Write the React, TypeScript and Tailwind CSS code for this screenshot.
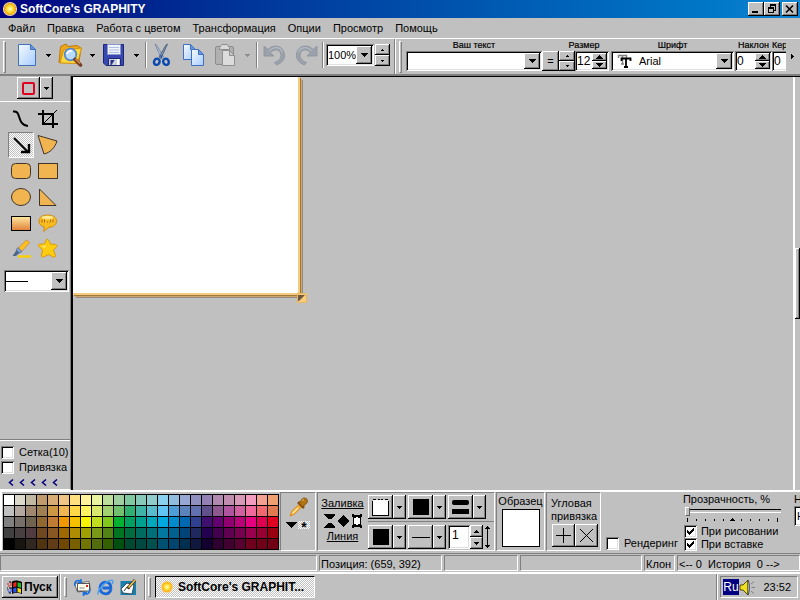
import React from 'react';

const RAISED =
  'bg-[#c0c0c0] shadow-[inset_-1px_-1px_0_#000,inset_1px_1px_0_#fff,inset_-2px_-2px_0_#808080]';
const SUNKEN =
  'bg-white shadow-[inset_1px_1px_0_#808080,inset_-1px_-1px_0_#fff,inset_2px_2px_0_#000,inset_-2px_-2px_0_#dfdfdf]';
const GROOVE = 'border border-t-[#808080] border-l-[#808080] border-r-white border-b-white';
const DITHER =
  'bg-[repeating-conic-gradient(#fff_0_25%,#c0c0c0_0_50%)] bg-[length:2px_2px]';

const palette: string[][] = [
  'ffffff ddd8cc c0b8a0 c09c6c d8ac74 f0c484 ffe080 fff49c e8f4a0 bce09c a0d0a0 80c8a0 88c8b8 90cccc 8cd0f0 90bce0 98a8d4 9090c0 9480b4 b088b0 c08cb0 d898b8 f49cc0 f4a090 f0a070',
  'c0c0c0 b4a8a0 a08870 a08050 cc9844 f0b450 ffd848 fff460 d8e86c a0d070 70c070 30b070 40b4a4 58bccc 60c4f4 4c9cd8 5c84bc 6070b0 60508c 905890 b054a0 d060a0 f0689c f06870 e07850',
  '808080 787068 706450 906830 c07c34 f09800 f4c000 f8f400 c0dc20 80c81c 00b030 00a060 00a090 00a8bc 00a8e0 008ccc 0068b0 304090 401070 640070 900070 b80078 e40080 e00050 e00020',
  '404040 484040 503c40 704820 885824 a06800 b08c00 a0a000 789818 508414 007420 006c40 006c60 007078 0078a0 006090 004478 202860 240050 440050 600050 780050 980050 980034 980010',
  '000000 181410 302820 503410 603c18 704800 786000 707400 546c10 346000 005010 004830 004840 005050 005070 004470 003050 101840 140030 300030 400030 580030 700020 700018 700014',
].map((row) => row.split(' ').map((c) => '#' + c));

/* ---------- small shared pieces ---------- */

const Down: React.FC<{ wide?: boolean; color?: string }> = ({ wide, color = '#000' }) => (
  <svg width={wide ? 7 : 5} height={wide ? 4 : 3} viewBox={wide ? '0 0 7 4' : '0 0 5 3'} shapeRendering="crispEdges">
    <path d={wide ? 'M0 0h7v1h-1v1h-1v1h-1v1h-1v-1h-1v-1h-1v-1h-1z' : 'M0 0h5v1h-1v1h-1v1h-1v-1h-1v-1h-1z'} fill={color} />
  </svg>
);

const Up: React.FC<{ small?: boolean; wide?: boolean }> = ({ small, wide }) => {
  if (wide) {
    return (
      <svg width="7" height="4" viewBox="0 0 7 4" shapeRendering="crispEdges">
        <path d="M0 4h7v-1h-1v-1h-1v-1h-1v-1h-1v1h-1v1h-1v1h-1z" />
      </svg>
    );
  }
  return (
    <svg width={small ? 3 : 5} height={small ? 2 : 3} viewBox={small ? '0 0 3 2' : '0 0 5 3'} shapeRendering="crispEdges">
      <path d={small ? 'M0 2h3v-1h-1v-1h-1v1h-1z' : 'M0 3h5v-1h-1v-1h-1v-1h-1v1h-1v1h-1z'} />
    </svg>
  );
};

const TinyDown = () => (
  <svg width="3" height="2" viewBox="0 0 3 2" shapeRendering="crispEdges">
    <path d="M0 0h3v1h-1v1h-1v-1h-1z" />
  </svg>
);

const Spin: React.FC<{ name: string; kind?: 'small' | 'wide' | 'mid' }> = ({ name, kind = 'small' }) => (
  <div className="flex h-full w-full flex-col">
    <button aria-label={`${name} +`} className={`${RAISED} flex min-h-0 flex-1 items-center justify-center`}>
      <Up small={kind === 'small'} wide={kind === 'wide'} />
    </button>
    <button aria-label={`${name} -`} className={`${RAISED} flex min-h-0 flex-1 items-center justify-center`}>
      {kind === 'small' ? <TinyDown /> : <Down wide={kind === 'wide'} />}
    </button>
  </div>
);

const Combo: React.FC<{ label: string; value?: string; className: string; children?: React.ReactNode; inset?: string }> = ({
  label,
  value = '',
  className,
  children,
  inset = 'pl-px',
}) => (
  <div className={`${SUNKEN} relative flex items-center p-[2px] ${className}`}>
    {children}
    <select aria-label={label} className={`h-full min-w-0 flex-1 appearance-none text-[11px] leading-4 outline-none ${inset}`}>
      <option>{value}</option>
    </select>
    <span className={`${RAISED} pointer-events-none absolute inset-y-[2px] right-[2px] flex w-4 items-center justify-center`}>
      <Down wide />
    </span>
  </div>
);

const NumberField: React.FC<{ label: string; value: string; className: string }> = ({ label, value, className }) => (
  <div className={`${SUNKEN} flex h-5 p-[2px] ${className}`}>
    <input aria-label={label} defaultValue={value} className="min-w-0 flex-1 text-xs outline-none" />
    <div className="w-[15px] shrink-0">
      <Spin name={label} kind="wide" />
    </div>
  </div>
);

const Check: React.FC<{ label: string; checked?: boolean; className?: string }> = ({ label, checked, className = 'gap-1' }) => (
  <label className={`flex items-center text-[11px] leading-[13px] whitespace-nowrap ${className}`}>
    <span className="grid shrink-0">
      <input
        type="checkbox"
        defaultChecked={checked}
        className={`${SUNKEN} peer col-start-1 row-start-1 size-[13px] appearance-none`}
      />
      <svg width="13" height="13" viewBox="0 0 13 13" shapeRendering="crispEdges" className="pointer-events-none col-start-1 row-start-1 hidden peer-checked:block">
        <path d="M3 5h1v1h1v1h1v-1h1v-1h1v-1h1v-1h1v3h-1v1h-1v1h-1v1h-1v1h-1v-1h-1v-1h-1z" />
      </svg>
    </span>
    {label}
  </label>
);

const Divider = () => <div className="h-[26px] w-[2px] shrink-0 border-l border-[#808080] bg-white" />;
const Grip = ({ className = 'h-8' }: { className?: string }) => (
  <div className={`w-[3px] shrink-0 border border-t-white border-l-white border-r-[#808080] border-b-[#808080] ${className}`} />
);

const ToolButton: React.FC<{ label: string; className: string; children: React.ReactNode }> = ({ label, className, children }) => (
  <button aria-label={label} className={`flex h-7 shrink-0 items-center justify-center ${className}`}>
    {children}
  </button>
);

/* ---------- icons ---------- */

const Sun = ({ size = 16 }: { size?: number }) => (
  <svg width={size} height={size} viewBox="0 0 16 16">
    <defs>
      <radialGradient id="sun">
        <stop offset="0" stopColor="#fffbe0" />
        <stop offset=".4" stopColor="#ffe850" />
        <stop offset=".8" stopColor="#ffbc10" />
        <stop offset="1" stopColor="#f0a830" />
      </radialGradient>
    </defs>
    <circle cx="8" cy="8" r="6.400" fill="none" stroke="#f8d8a0" strokeWidth="1.400" />
    <circle cx="8" cy="8" r="6" fill="url(#sun)" />
  </svg>
);

const PageShape = ({ x, y, w, h, gray }: { x: number; y: number; w: number; h: number; gray?: boolean }) => (
  <g transform={`translate(${x} ${y})`}>
    <path
      d={`M.5 .5H${w - 5.5}L${w - 0.5} 5.5V${h - 0.5}H.5Z`}
      fill={gray ? '#dcdcdc' : 'url(#paper)'}
      stroke={gray ? '#909090' : '#4070c0'}
    />
    <path d={`M${w - 5.5} .5V5.5H${w - 0.5}Z`} fill={gray ? '#c8c8c8' : '#6898e0'} stroke={gray ? '#909090' : '#4070c0'} strokeLinejoin="round" />
  </g>
);

const paperGradient = (
  <defs>
    <linearGradient id="paper" x1="0" y1="0" x2="1" y2="1">
      <stop offset="0" stopColor="#f4faff" />
      <stop offset="1" stopColor="#a8ccff" />
    </linearGradient>
  </defs>
);

const NewIcon = () => (
  <svg width="19" height="24" viewBox="0 0 19 24">
    {paperGradient}
    <PageShape x={0} y={1} w={18} h={22} />
  </svg>
);

const OpenIcon = () => (
  <svg width="25" height="24" viewBox="0 0 25 24">
    <path d="M1 19.500L2.500 3.500L8 1L10 3.500L19 2.500L23 5L21 19Z" fill="#f0a818" stroke="#b87810" />
    <path d="M2 20L5.500 7L23.500 5L19.500 20.500Z" fill="#ffd83c" stroke="#d09010" />
    <circle cx="12.500" cy="11.500" r="5.800" fill="#b8dcff" stroke="#5888c8" strokeWidth="1.800" />
    <path d="M9 11a4 4 0 0 1 5-3" stroke="#fff" strokeWidth="1.800" fill="none" />
    <path d="M17 16.500L22.500 22" stroke="#784028" strokeWidth="3.600" strokeLinecap="round" />
    <path d="M17.500 16L22 20.500" stroke="#d88848" strokeWidth="1.400" />
  </svg>
);

const SaveIcon = () => (
  <svg width="22" height="24" viewBox="0 0 22 24">
    <path d="M.5 1.500H20.500V22.500H3L.5 20Z" fill="#3848b0" stroke="#182878" />
    <path d="M4.500 1.500h13v10h-13z" fill="#f0f4fc" stroke="#8898c8" />
    <path d="M6 4.500h10M6 7h10M6 9.500h10" stroke="#b0bce0" />
    <path d="M5.500 15.500h12v7h-12z" fill="#c8d0dc" stroke="#202870" />
    <path d="M7.500 17h4l-3 5h-1z" fill="#283080" />
    <path d="M15 16v6" stroke="#fff" strokeWidth="2" />
  </svg>
);

const CutIcon = () => (
  <svg width="19" height="24" viewBox="0 0 19 24">
    <path d="M3 1L4.500 2L11.500 14L9.500 15.500Z" fill="#c8d8ec" stroke="#607898" strokeWidth=".8" />
    <path d="M15.500 1L14 2L7 14L9 15.500Z" fill="#8098b8" stroke="#405878" strokeWidth=".8" />
    <path d="M10.500 12.500L9.200 15L8 12.500" fill="#1848a0" />
    <ellipse cx="4.800" cy="18.800" rx="2.700" ry="3.200" transform="rotate(28 4.800 18.800)" fill="none" stroke="#0848b0" strokeWidth="2.400" />
    <ellipse cx="14" cy="18.800" rx="2.700" ry="3.200" transform="rotate(-28 14 18.800)" fill="none" stroke="#0848b0" strokeWidth="2.400" />
  </svg>
);

const CopyIcon = () => (
  <svg width="22" height="24" viewBox="0 0 22 24">
    <PageShape x={0} y={1} w={13} h={16} />
    <PageShape x={8} y={6} w={13} h={17} />
  </svg>
);

const PasteIcon = () => (
  <svg width="22" height="24" viewBox="0 0 22 24">
    <rect x=".5" y="3.500" width="18" height="18" rx="1.500" fill="#b0b0b0" stroke="#8c8c8c" />
    <path d="M4.500 4.500L7 1.500H12L14.500 4.500V6.500H4.500Z" fill="#d8d8d8" stroke="#8c8c8c" />
    <PageShape x={7} y={7} w={13} h={16} gray />
  </svg>
);

const UndoIcon = ({ flip }: { flip?: boolean }) => (
  <svg width="23" height="22" viewBox="0 0 23 22" className={flip ? '-scale-x-100' : ''}>
    <path d="M1 2V12H11L7.500 8.500C11 4.500 17.500 5 18 11C18.200 14.500 15 17.500 11.500 18.500L13.500 21C19 19 22 15 21.500 10C20.500 1.500 10.500 -.5 5 5.500Z" fill="#9ca2ac" stroke="#8a909a" strokeWidth=".8" />
    <path d="M6.500 7C10 2 18 2.500 19.500 8.500" fill="none" stroke="#b4bac4" strokeWidth="1.200" />
  </svg>
);

const tools: { name: string; icon: React.ReactNode }[] = [
  { name: 'Кривая', icon: <path d="M3 3.500C7 3 8 5 9 8.500C10.500 13.500 12 17.500 18 18" fill="none" stroke="#000" strokeWidth="2" /> },
  {
    name: 'Обрезка',
    icon: (
      <g fill="none" stroke="#000">
        <path d="M1 6h15v14M6 2v14h15" strokeWidth="2" />
        <path d="M6 16L20 2" />
      </g>
    ),
  },
  {
    name: 'Стрелка',
    icon: (
      <g fill="none" stroke="#000" strokeWidth="2">
        <path d="M4 4L18 18" />
        <path d="M19 10v9M11 18h9" strokeWidth="2.400" />
      </g>
    ),
  },
  { name: 'Сектор', icon: <path d="M1 1.500L20 7C18 13.500 13.500 18.500 7 20Z" fill="#f0b450" stroke="#40342c" /> },
  { name: 'Скруглённый прямоугольник', icon: <rect x="1.500" y="3.500" width="19" height="15" rx="4" fill="#f0b450" stroke="#40342c" /> },
  { name: 'Прямоугольник', icon: <rect x="1.500" y="3.500" width="19" height="15" fill="#f0b450" stroke="#40342c" /> },
  { name: 'Эллипс', icon: <ellipse cx="11" cy="11" rx="9.500" ry="8.500" fill="#f0b450" stroke="#40342c" /> },
  { name: 'Треугольник', icon: <path d="M2.500 3V19.500H19Z" fill="#f0b450" stroke="#40342c" /> },
  {
    name: 'Градиент',
    icon: (
      <>
        <defs>
          <linearGradient id="grad" x1="0" y1="0" x2="0" y2="1">
            <stop offset="0" stopColor="#ffe8a0" />
            <stop offset="1" stopColor="#e08038" />
          </linearGradient>
        </defs>
        <rect x="1.500" y="4.500" width="19" height="14" fill="url(#grad)" stroke="#000" />
      </>
    ),
  },
  {
    name: 'Выноска',
    icon: (
      <>
        <path d="M10.500 3C5 3 2 5.300 2 9C2 12.300 4.500 14.500 7.500 15L6.500 19.500L12 15.300C17 15 19.500 12.500 19.500 9C19.500 5.300 16 3 10.500 3Z" fill="#f8bc20" stroke="#d08c18" />
        <ellipse cx="10.500" cy="5.500" rx="6" ry="1.800" fill="#ffe890" />
        <path d="M5 7.500v3M7.500 7.500v3M10 10h1M13.500 7.500v2l-1 1M16 7.500v2l-1 1" stroke="#a86410" fill="none" />
      </>
    ),
  },
  {
    name: 'Маркер',
    icon: (
      <>
        <path d="M8 18.500h13" stroke="#ffd000" strokeWidth="2.400" />
        <path d="M2.500 18L7 11.500L10 14.500L6 18Z" fill="#506888" />
        <path d="M8 10.500L16.500 2L19.500 4.500L11 14Z" fill="#ffc020" stroke="#c88818" strokeWidth=".8" />
        <path d="M6 12l2-2.500l4 4l-2.500 1.500z" fill="#88a0d0" stroke="#486098" strokeWidth=".7" />
      </>
    ),
  },
  {
    name: 'Звезда',
    icon: (
      <>
        <path d="M9.500 1.500C10.500 1 11.500 1.500 12 3L13.500 6L18.500 6.500C20.500 7 20.500 8.500 19 9.500L16.500 12L18.500 17.500C18.500 19 17.500 19.500 16 19L11.500 16.500L6.500 19C5 19.500 4 18.500 4.500 17L5.500 12L2 8.500C1 7 1.500 6 3.500 6L7.500 6Z" fill="#ffcc10" stroke="#d89810" />
        <path d="M9.500 3.500L8.500 7.500L4.500 8L8 10" fill="#fff080" />
      </>
    ),
  },
];

const WindowsFlag = () => (
  <svg width="17" height="15" viewBox="0 0 17 15">
    <path d="M6 1.500C9 0 11.500 0 16 2V14C11.500 12 9 12.500 6 14Z" fill="#000" />
    <path d="M7.200 3C8.500 2.300 9.500 2 10.500 2V6.500C9.500 6.500 8.500 6.700 7.200 7.300Z" fill="#f02018" />
    <path d="M11.500 2.200L15 3.300V8L11.500 6.700Z" fill="#18c020" />
    <path d="M7.200 8.400C8.500 7.700 9.500 7.500 10.500 7.600V12C9.500 12 8.500 12.200 7.200 12.800Z" fill="#2850f8" />
    <path d="M11.500 7.700L15 9V13L11.500 12Z" fill="#f8e010" />
    <path d="M4 3h2M4 5h2M1 4h2M2 6h2" stroke="#e02020" />
    <path d="M4 9h2M4 11h2M1 10h2M2 12h2" stroke="#2040e0" />
    <path d="M3 2h2M3 8h3M1 8h1M3 13h2" stroke="#000" />
  </svg>
);

const MailIcon = () => (
  <svg width="17" height="17" viewBox="0 0 17 17">
    <path d="M.5 4.500L15 2.500L16.500 11L3.500 13Z" fill="#fff" stroke="#505050" strokeWidth=".8" />
    <path d="M3.500 4.500h12v7.500h-12z" fill="#fffbe8" stroke="#303030" strokeWidth=".8" />
    <path d="M12 6h2v2h-2z" fill="#e02020" />
    <path d="M5.500 9h5" stroke="#888" />
    <path d="M1 7C0 2.500 3 .5 7 2M7 0v3.500H4" fill="none" stroke="#1870e0" strokeWidth="1.600" />
    <path d="M15.500 10C16.500 14 13 16 9.500 14.500M9.500 17v-3.500H13" fill="none" stroke="#1870e0" strokeWidth="1.600" />
  </svg>
);

const ExplorerIcon = () => (
  <svg width="17" height="17" viewBox="0 0 17 17">
    <path d="M14 10.500C13 13.500 11 14.800 8.500 14.800C5 14.800 3 12.300 3 9C3 5.500 5.500 3.200 8.600 3.200C12 3.200 14 5.500 13.900 9H5.500" fill="none" stroke="#1868d8" strokeWidth="2.800" />
    <path d="M1.500 15.500C-1 12 9.500 1 14.500 1.200C16.500 1.300 16 3.500 15 5" fill="none" stroke="#48a0f0" strokeWidth="1.500" />
  </svg>
);

const DesktopIcon = () => (
  <svg width="17" height="17" viewBox="0 0 17 17">
    <rect x=".5" y="2" width="15.500" height="14" fill="#1880b0" />
    <path d="M1 10L7 4L14 6L12 15L3 14Z" fill="#fff" stroke="#203040" strokeWidth=".8" />
    <path d="M4 12L7 8L10 9.500" fill="none" stroke="#304050" />
    <path d="M7.500 9.500L15 1" stroke="#503010" strokeWidth="3" />
    <path d="M8.500 8.500L15 1" stroke="#f0c860" strokeWidth="1.600" />
  </svg>
);

const SpeakerIcon = () => (
  <svg width="17" height="17" viewBox="0 0 17 17">
    <path d="M1 6h3L9 1V16L4 11H1Z" fill="#f0e020" stroke="#404000" strokeWidth=".9" />
    <path d="M9 1C11 5 11 12 9 16Z" fill="#fff" stroke="#404040" strokeWidth=".9" />
    <path d="M12 5L15 2.500M12.500 8.500H16M12 12L15 14.500" stroke="#808080" />
  </svg>
);

const Dropper = () => (
  <svg width="19" height="20" viewBox="0 0 19 20">
    <path d="M1 19L3 14L10 7.500L12.500 10L5.500 17Z" fill="#f8b040" stroke="#d88818" />
    <path d="M3.500 16.500L9 11" stroke="#ffe8a0" strokeWidth="1.500" />
    <path d="M9 5L15 11" stroke="#805010" strokeWidth="2.600" />
    <path d="M10.500 6.500L12.500 2.500L15 .8L18 2L18.500 5L16.500 7.500L13.500 9.500Z" fill="#b07410" stroke="#805010" strokeWidth=".8" />
    <path d="M13 3.500l2-1" stroke="#f0c060" />
  </svg>
);

/* ---------- page sections ---------- */

const TitleBar = () => (
  <header className="flex h-[18px] items-center bg-linear-to-r from-[#000080] to-[#1084d0] pr-[2px] pl-[2px] text-white">
    <Sun />
    <h1 className="ml-[2px] flex-1 text-xs font-bold">SoftCore's GRAPHITY</h1>
    <button aria-label="Свернуть" className={`${RAISED} flex h-[14px] w-4 items-center justify-center`}>
      <svg width="12" height="10" viewBox="0 0 12 10"><path d="M2 7h6v2H2z" /></svg>
    </button>
    <button aria-label="Восстановить" className={`${RAISED} flex h-[14px] w-4 items-center justify-center`}>
      <svg width="12" height="10" viewBox="0 0 12 10" fill="none" stroke="#000" shapeRendering="crispEdges">
        <path d="M4 .5h6M4 1.500h6M4.500 2v2M9.500 2v4.500H8M2 4.500h6M2 3.500h6M2.500 4v4.500h5V4" />
      </svg>
    </button>
    <button aria-label="Закрыть" className={`${RAISED} ml-[2px] flex h-[14px] w-4 items-center justify-center`}>
      <svg width="12" height="10" viewBox="0 0 12 10" stroke="#000" strokeWidth="1.600"><path d="M2 1.500l7 7M9 1.500l-7 7" /></svg>
    </button>
  </header>
);

const MenuBar = () => (
  <nav className="flex h-5 items-center gap-3 px-2 text-[11px]">
    {['Файл', 'Правка', 'Работа с цветом', 'Трансформация', 'Опции', 'Просмотр', 'Помощь'].map((item) => (
      <button key={item}>{item}</button>
    ))}
  </nav>
);

const Field: React.FC<{ label: string; className?: string; children: React.ReactNode }> = ({ label, className = '', children }) => (
  <div className={`flex flex-col ${className}`}>
    <span className="text-center text-[9px] leading-3 whitespace-nowrap [-webkit-text-stroke:0.2px_#000]">{label}</span>
    <div className="flex">{children}</div>
  </div>
);

const Toolbar = () => (
  <div className="flex h-[38px] overflow-hidden border-t border-b-2 border-t-white border-b-[#808080]">
    <div className="flex shrink-0 items-center pl-[3px]">
      <Grip />
      <div className="flex items-center pb-[3px]">
        <ToolButton label="Создать" className="ml-[7px] w-7"><NewIcon /></ToolButton>
        <ToolButton label="Создать из" className="w-[14px]"><Down /></ToolButton>
        <ToolButton label="Открыть" className="w-[30px]"><OpenIcon /></ToolButton>
        <ToolButton label="Недавние" className="w-[14px]"><Down /></ToolButton>
        <ToolButton label="Сохранить" className="w-[30px]"><SaveIcon /></ToolButton>
        <ToolButton label="Сохранить как" className="mr-[2px] w-[14px]"><Down /></ToolButton>
        <Divider />
        <ToolButton label="Вырезать" className="w-7"><CutIcon /></ToolButton>
        <ToolButton label="Копировать" className="ml-[3px] w-8"><CopyIcon /></ToolButton>
        <ToolButton label="Вставить" className="w-8"><PasteIcon /></ToolButton>
        <ToolButton label="Вставить как" className="mr-1 w-[10px]"><Down color="#8c8c8c" /></ToolButton>
        <Divider />
        <ToolButton label="Отменить" className="w-8"><UndoIcon /></ToolButton>
        <ToolButton label="Повторить" className="w-8"><UndoIcon flip /></ToolButton>
        <Divider />
        <Combo label="Масштаб" value="100%" className="ml-[2px] h-[22px] w-12" inset="pl-0" />
        <div className="ml-px h-[22px] w-[15px]"><Spin name="Масштаб" /></div>
      </div>
    </div>
    <div className="ml-[5px] flex min-w-0 flex-1 border-l border-white shadow-[-1px_0_0_#808080]">
      <div className="flex items-center pr-1 pl-[3px]"><Grip /></div>
      <Field label="Ваш текст" className="min-w-0 flex-1"><Combo label="Ваш текст" className="h-5 min-w-0 flex-1" /></Field>
      <div className="flex items-start pt-3">
        <button className={`${RAISED} h-5 w-[17px] text-[11px]`}>=</button>
      </div>
      <Field label="Размер">
        <div className="h-5 w-4"><Spin name="Шаг" /></div>
        <NumberField label="Размер" value="12" className="w-[34px]" />
      </Field>
      <Field label="Шрифт" className="ml-[2px]">
        <Combo label="Шрифт" value="Arial" className="h-5 w-[123px]" inset="pl-[6px]">
          <svg width="16" height="16" viewBox="0 0 16 16" className="ml-1 shrink-0">
            <path d="M1.500 5V2.500h8V5M5.500 2.500V11M4 11h3" fill="none" stroke="#808080" strokeWidth="1.400" />
            <path d="M4.500 8V5.500h9V8M9 5.500V14M7 14h4" fill="none" stroke="#000" strokeWidth="1.800" />
          </svg>
        </Combo>
      </Field>
      <Field label="Наклон" className="ml-px"><NumberField label="Наклон" value="0" className="w-[37px]" /></Field>
      <div className="w-[14px] overflow-hidden">
        <Field label="Кернинг" className="w-8"><NumberField label="Кернинг" value="0" className="w-[39px] shrink-0" /></Field>
      </div>
      <button aria-label="Ещё" className="flex w-[14px] items-center justify-center pr-px">
        <svg width="3" height="5" viewBox="0 0 3 5" shapeRendering="crispEdges"><path d="M0 0h1v1h1v1h1v1h-1v1h-1v1h-1z" /></svg>
      </button>
    </div>
  </div>
);

const SidePanel = () => (
  <aside className="flex w-[71px] shrink-0 flex-col border-r border-b border-[#808080] border-b-white">
    <div className="flex justify-center border-b border-white pt-px pb-[2px]">
      <button aria-label="Фигура" className={`${RAISED} flex h-[22px] w-[23px] items-center justify-center`}>
        <svg width="13" height="13" viewBox="0 0 13 13"><rect x="1" y="1" width="11" height="11" rx="1" fill="none" stroke="#e00020" strokeWidth="2" /></svg>
      </button>
      <button aria-label="Выбор фигуры" className={`${RAISED} flex h-[22px] w-[13px] items-center justify-center`}><Down /></button>
    </div>
    <div className="grid grid-cols-2 gap-x-px pt-1 pr-[9px] pl-2">
      {tools.map((tool) => (
        <button
          key={tool.name}
          aria-label={tool.name}
          className={`flex h-[26px] items-center justify-center ${
            tool.name === 'Стрелка' ? `${DITHER} ${GROOVE}` : ''
          }`}
        >
          <svg width="22" height="22" viewBox="0 0 22 22" className="shrink-0">{tool.icon}</svg>
        </button>
      ))}
    </div>
    <Combo label="Тип линии" className="mt-2 mr-px ml-1 h-[22px]" inset="w-0">
      <svg width="22" height="1" viewBox="0 0 22 1" className="shrink-0"><path d="M0 0h22v1H0z" /></svg>
    </Combo>
    <div className="mt-auto flex flex-col gap-[2px] border-t border-[#808080] pt-[6px] pl-px shadow-[inset_0_1px_0_#fff]">
      <Check label="Сетка(10)" className="gap-[5px]" />
      <Check label="Привязка" className="gap-[5px]" />
      <button aria-label="Скрыть панель" className="flex h-[13px] items-center gap-[5px] pl-[7px]">
        {[0, 1, 2, 3, 4].map((i) => (
          <svg key={i} width="6" height="7" viewBox="0 0 6 7"><path d="M5 .5L1.500 3.500L5 6.500" fill="none" stroke="#000080" strokeWidth="1.500" /></svg>
        ))}
      </button>
    </div>
  </aside>
);

const Workspace = () => (
  <main className="flex min-w-0 flex-1 border-t border-l-2 border-black">
    <div className="min-w-0 flex-1 overflow-hidden">
      <div className="relative h-[218px] w-[227px] border-r-2 border-b-2 border-[#f4cc80] bg-white shadow-[1px_1px_0_#a07838,2px_2px_0_#d0a464,3px_3px_0_#908c84]">
        <svg width="10" height="10" viewBox="0 0 10 10" className="absolute -right-[9px] -bottom-[10px]">
          <path d="M0 0h10v10H0z" fill="#f8cc78" />
          <path d="M1 2h7l-6 6h-1z" fill="#705840" />
          <path d="M.5 .5h9v9h-9z" fill="none" stroke="#e8b460" />
        </svg>
      </div>
    </div>
    <div className="flex w-[7px] flex-col border-l-2 border-white pt-[171px]">
      <div className={`${RAISED} h-[71px]`} />
    </div>
  </main>
);

const SplitButton: React.FC<{ label: string; children: React.ReactNode }> = ({ label, children }) => (
  <div className="flex shrink-0">
    <button aria-label={label} className={`${RAISED} flex h-6 w-[25px] items-center justify-center`}>{children}</button>
    <button aria-label={`${label}: выбор`} className={`${RAISED} flex h-6 w-[13px] items-center justify-center`}><Down /></button>
  </div>
);

const FillAndLine = () => (
  <section className={`${GROOVE} ml-px flex w-[178px] shrink-0`}>
    <div className="flex w-[50px] shrink-0 flex-col items-center pr-px text-[11px] leading-[14px]">
      <a href="#fill" className="mt-[3px] underline">Заливка</a>
      <svg width="40" height="16" viewBox="0 0 40 16" className="mt-[3px]" shapeRendering="crispEdges">
        <path d="M1 1h11v1L8 6H5L1 2zM1 15h11v-1L8 10H5L1 14z" />
        <path d="M20 2L26 8L20 14L14 8z" />
        <path d="M29 1h2v1h6v-1h2v3h-1v8h1v3h-2v-1h-6v1h-2v-3h1V4h-1z" />
        <path d="M31 5h6v6h-6z" fill="#fff" />
        <path d="M33 4h2v8h-2z" fill="#fff" />
      </svg>
      <a href="#line" className="underline">Линия</a>
    </div>
    <div className="flex min-w-0 flex-1 flex-col">
      <div className="flex h-[29px] gap-[2px] border-b border-[#808080] pt-[2px]">
        <SplitButton label="Заливка">
          <svg width="17" height="17" viewBox="0 0 17 17" shapeRendering="crispEdges">
            <path d="M.5 2v14.500h16V2z" fill="#fff" />
            <path d="M.5 2v14.500h16V2M1 .5h3M6 .5h2M9 .5h2M13 .5h3" fill="none" stroke="#000" />
            <path d="M1 1h15v2H1z" fill="#fff" />
          </svg>
        </SplitButton>
        <SplitButton label="Цвет заливки"><span className="size-4 bg-black" /></SplitButton>
        <SplitButton label="Штрих">
          <svg width="17" height="16" viewBox="0 0 17 16"><rect y="1" width="17" height="5" rx="2" /><rect y="10" width="17" height="5" /></svg>
        </SplitButton>
      </div>
      <div className="flex gap-[2px] pt-[3px]">
        <SplitButton label="Цвет линии"><span className="size-4 bg-black" /></SplitButton>
        <SplitButton label="Стиль линии"><span className="h-px w-[18px] bg-black" /></SplitButton>
        <div className="flex">
          <input aria-label="Толщина" defaultValue="1" className={`${SUNKEN} h-6 w-[22px] pb-1 pl-1 text-xs outline-none`} />
          <div className="h-6 w-[13px]"><Spin name="Толщина" kind="mid" /></div>
        </div>
        <svg width="5" height="22" viewBox="0 0 5 22" className="mt-px shrink-0" shapeRendering="crispEdges">
          <path d="M2 0h1v1h1v1h1v1H3v16h2v1H4v1H3v1H2v-1H1v-1H0v-1h2V3H0V2h1V1h1z" />
        </svg>
      </div>
    </div>
  </section>
);

const BottomPanel = () => (
  <div className="flex h-16 overflow-hidden border-t-2 border-b border-white border-b-[#808080] pb-[2px]">
    <div className="shrink-0 border-l-2 border-white pt-[2px] pl-px">
      <div className="grid grid-cols-[repeat(25,10px)] grid-rows-[repeat(5,10px)] gap-px bg-black p-px">
        {palette.flat().map((color, i) => (
          <button key={i} aria-label={color} style={{ backgroundColor: color }} />
        ))}
      </div>
    </div>
    <div className={`${GROOVE} ml-px flex w-9 shrink-0 flex-col items-center pt-1`}>
      <button aria-label="Пипетка"><Dropper /></button>
      <div className="mt-1 flex items-start gap-px">
        <svg width="11" height="6" viewBox="0 0 11 6" className="mt-px" shapeRendering="crispEdges"><path d="M0 0h11L6 6H5z" /></svg>
        <span className={`${DITHER} flex h-2 w-3 items-center justify-center pt-1 text-sm leading-none font-bold`}>*</span>
      </div>
    </div>
    <FillAndLine />
    <section className={`${GROOVE} ml-px flex w-[49px] shrink-0 flex-col items-center pt-px text-[11px] leading-[15px]`}>
      <span>Образец</span>
      <div className="size-[38px] border border-black bg-white" />
    </section>
    <section className={`${GROOVE} ml-px flex w-[55px] shrink-0 flex-col pt-1 pl-1 text-[11px] leading-[13px]`}>
      <span>Угловая<br />привязка</span>
      <div className="flex pt-px pl-px">
        <button aria-label="Плюс" className={`${RAISED} flex h-[23px] w-[23px] items-center justify-center`}>
          <svg width="15" height="15" viewBox="0 0 15 15" shapeRendering="crispEdges"><path d="M7 0h1v7h7v1H8v7H7V8H0V7h7z" /></svg>
        </button>
        <button aria-label="Крест" className={`${RAISED} flex h-[23px] w-[23px] items-center justify-center`}>
          <svg width="15" height="15" viewBox="0 0 15 15" stroke="#000"><path d="M1 1l13 13M14 1L1 14" /></svg>
        </button>
      </div>
    </section>
    <div className="flex shrink-0 items-end pb-px pl-[5px]"><Check label="Рендеринг" className="gap-[5px]" /></div>
    <section className="ml-[5px] flex w-[98px] shrink-0 flex-col">
      <label htmlFor="opacity" className="text-[11px] leading-[14px] whitespace-nowrap">Прозрачность, %</label>
      <input
        id="opacity"
        type="range"
        defaultValue={0}
        className="ml-[2px] h-[9px] w-24 appearance-none bg-transparent [&::-webkit-slider-runnable-track]:h-1 [&::-webkit-slider-runnable-track]:border-t [&::-webkit-slider-runnable-track]:border-b [&::-webkit-slider-runnable-track]:border-t-black [&::-webkit-slider-runnable-track]:border-b-white [&::-webkit-slider-thumb]:-mt-[3px] [&::-webkit-slider-thumb]:h-[9px] [&::-webkit-slider-thumb]:w-[5px] [&::-webkit-slider-thumb]:appearance-none [&::-webkit-slider-thumb]:border [&::-webkit-slider-thumb]:border-t-white [&::-webkit-slider-thumb]:border-r-[#606060] [&::-webkit-slider-thumb]:border-b-[#606060] [&::-webkit-slider-thumb]:border-l-white [&::-webkit-slider-thumb]:bg-[#c0c0c0]"
      />
      <svg width="98" height="10" viewBox="0 0 98 10" shapeRendering="crispEdges">
        <path d="M4 3h1v4H4zM13 4h1v2h-1zM22 4h1v2h-1zM31 4h1v2h-1zM40 4h1v2h-1zM58 4h1v2h-1zM67 4h1v2h-1zM76 4h1v2h-1zM85 4h1v2h-1zM94 3h1v4h-1zM49 3h1v1h1v1h1v1h-5V5h1V4h1z" />
      </svg>
      <Check label="При рисовании" checked className="gap-1 pl-px" />
      <Check label="При вставке" checked className="gap-1 pl-px" />
    </section>
    <section className="ml-auto w-[6px] shrink-0 overflow-hidden text-[11px] leading-[14px]">
      <label htmlFor="strength">Нажим</label>
      <input id="strength" defaultValue="Нет" className={`${SUNKEN} h-5 w-16 pl-[3px] outline-none`} />
    </section>
  </div>
);

const StatusBar = () => (
  <footer className="flex h-[19px] gap-[2px] border-b border-white py-px text-[11px] leading-4 whitespace-nowrap">
    <div className={`${GROOVE} w-[317px]`} />
    <div className={`${GROOVE} w-[123px] pl-px`}>Позиция: (659, 392)</div>
    <div className={`${GROOVE} w-[74px]`} />
    <div className={`${GROOVE} min-w-0 flex-1`} />
    <div className={`${GROOVE} w-[31px] pl-px`}>Клон</div>
    <div className={`${GROOVE} w-[123px] pl-px whitespace-pre`}>{'<-- 0  История  0 -->'}</div>
  </footer>
);

const TaskBar = () => (
  <nav className="flex h-[27px] items-center border-t border-white px-[2px]">
    <button className={`${RAISED} flex h-[22px] w-14 items-center gap-px pl-1 text-xs font-bold`}>
      <WindowsFlag />
      Пуск
    </button>
    <div className="mr-[3px] ml-px"><Divider /></div>
    <Grip className="h-5" />
    <div className="mr-[7px] ml-[7px] flex gap-[6px]">
      <button aria-label="Почта"><MailIcon /></button>
      <button aria-label="Обозреватель"><ExplorerIcon /></button>
      <button aria-label="Рабочий стол"><DesktopIcon /></button>
    </div>
    <Divider />
    <div className="mr-1 ml-[2px]"><Grip className="h-5" /></div>
    <button className={`${DITHER} flex h-[22px] w-40 items-center gap-1 border border-black border-r-white border-b-white pl-1 text-xs font-bold`}>
      <Sun size={14} />
      <span className="whitespace-nowrap">SoftCore's GRAPHIT...</span>
    </button>
    <div className="ml-auto"><Divider /></div>
    <div className={`${GROOVE} ml-[2px] flex h-[22px] w-[78px] items-center pl-[2px]`}>
      <button className="h-4 w-4 bg-[#000080] text-xs leading-4 text-white">Ru</button>
      <SpeakerIcon />
      <time className="ml-auto pr-[6px] text-[11px]">23:52</time>
    </div>
  </nav>
);

const App: React.FC = () => {
  return (
    <div className="flex min-h-screen flex-col overflow-hidden bg-[#c0c0c0] font-['Liberation_Sans',Arial,sans-serif] text-[11px] text-black select-none">
      <TitleBar />
      <MenuBar />
      <Toolbar />
      <div className="flex flex-1">
        <SidePanel />
        <Workspace />
      </div>
      <BottomPanel />
      <StatusBar />
      <TaskBar />
    </div>
  );
};

export default App;
